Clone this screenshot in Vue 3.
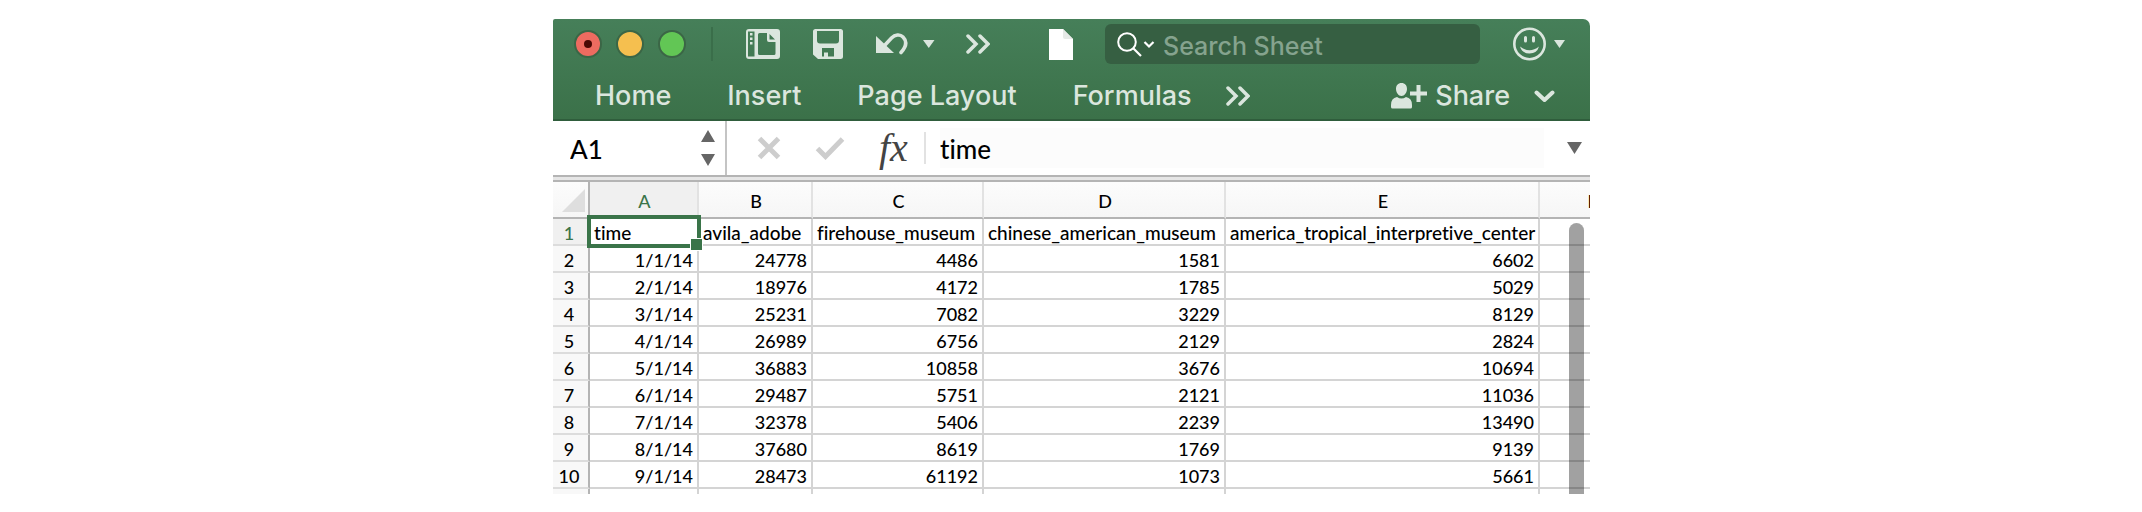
<script setup>
import { ref } from 'vue'

const tabs = ['Home', 'Insert', 'Page Layout', 'Formulas']
const columns = ['A', 'B', 'C', 'D', 'E', 'F']
const rows = [
  ['time', 'avila_adobe', 'firehouse_museum', 'chinese_american_museum', 'america_tropical_interpretive_center', ''],
  ['1/1/14', '24778', '4486', '1581', '6602', ''],
  ['2/1/14', '18976', '4172', '1785', '5029', ''],
  ['3/1/14', '25231', '7082', '3229', '8129', ''],
  ['4/1/14', '26989', '6756', '2129', '2824', ''],
  ['5/1/14', '36883', '10858', '3676', '10694', ''],
  ['6/1/14', '29487', '5751', '2121', '11036', ''],
  ['7/1/14', '32378', '5406', '2239', '13490', ''],
  ['8/1/14', '37680', '8619', '1769', '9139', ''],
  ['9/1/14', '28473', '61192', '1073', '5661', '']
]
const cellName = ref('A1')
const formula = ref('time')
const query = ref('')
</script>

<template>
  <main class="page">
    <div class="window">
      <header class="ribbon">
        <div class="titlebar">
          <div class="lights">
            <button class="light red" aria-label="Close"><span class="dot"></span></button>
            <button class="light amber" aria-label="Minimize"></button>
            <button class="light green" aria-label="Zoom"></button>
          </div>
          <span class="separator"></span>
          <button class="tool" aria-label="Templates">
            <svg width="34" height="30" viewBox="0 0 34 30">
              <path fill="#dbe6de" fill-rule="evenodd" d="M3 0H31Q34 0 34 3V27Q34 30 31 30H3Q0 30 0 27V3Q0 0 3 0ZM2 2.500V27.500H8.500V2.500ZM13.500 4Q12 4 12 5.500V24.500Q12 26 13.500 26H28Q29.500 26 29.500 24.500V13H23Q21 13 21 11V4Z" />
              <path fill="#417853" d="M23.500 5L29 10.500H23.500Z" />
              <path fill="#dbe6de" d="M4 4h2.500v2.500H4zM4 8.500h2.500V11H4zM4 13h2.500v2.500H4z" />
            </svg>
          </button>
          <button class="tool" aria-label="Save">
            <svg width="30" height="30" viewBox="0 0 30 30">
              <path fill="#dbe6de" fill-rule="evenodd" d="M2.500 0H27.500Q30 0 30 2.500V27.500Q30 30 27.500 30H5L0 25.500V2.500Q0 0 2.500 0ZM4 2V11.500Q4 14.500 7 14.500H23Q26 14.500 26 11.500V2ZM9 19V27.500H11V23.500H15V27.500H21V19Z" />
            </svg>
          </button>
          <button class="tool" aria-label="Undo">
            <svg width="32" height="22" viewBox="0 0 32 22">
              <path fill="#dbe6de" d="M0 3V20H18Z" />
              <path fill="none" stroke="#dbe6de" stroke-width="3.600" stroke-linecap="round" d="M9 12L15.500 5C19 1.500 24 1 27 4C31.500 8.500 30 14 25 19.500" />
            </svg>
          </button>
          <button class="tool undo-more" aria-label="Undo history">
            <svg width="12" height="8" viewBox="0 0 12 8"><path fill="#dbe6de" d="M0 0H11.500L5.750 8Z" /></svg>
          </button>
          <button class="tool commands" aria-label="More commands">
            <svg width="24" height="20" viewBox="0 0 24 20"><path class="line" d="M2 2L10 10L2 18M14 2L22 10L14 18" /></svg>
          </button>
          <svg class="file" width="24" height="31" viewBox="0 0 24 31">
            <path fill="#fff" d="M0 0H14L24 10V31H0Z" />
            <path fill="#e6eae7" d="M14 0L24 10H16Q14 10 14 8Z" />
          </svg>
          <label class="search">
            <svg width="38" height="26" viewBox="0 0 38 26">
              <circle cx="10" cy="10" r="8.800" fill="none" stroke="#fff" stroke-width="2" />
              <path fill="none" stroke="#fff" stroke-width="2.200" d="M16 16L24 24M27.500 10L32 14.500L36.500 10" />
            </svg>
            <input v-model="query" type="text" placeholder="Search Sheet" aria-label="Search Sheet">
          </label>
          <button class="tool smile" aria-label="Feedback">
            <svg width="33" height="34" viewBox="0 0 33 34">
              <circle cx="16.500" cy="17" r="15.200" fill="none" stroke="#dbe6de" stroke-width="2.600" />
              <path fill="none" stroke="#dbe6de" stroke-width="3" stroke-linecap="round" d="M12.500 10.500V14M20.500 10.500V14" />
              <path fill="#dbe6de" d="M7 19.500Q16.500 27 26 19.500Q24 26.500 16.500 26.500Q9 26.500 7 19.500Z" />
            </svg>
          </button>
          <button class="tool feedback-more" aria-label="Feedback options">
            <svg width="11" height="8" viewBox="0 0 11 8"><path fill="#dbe6de" d="M0 0H11L5.500 8Z" /></svg>
          </button>
        </div>
        <nav class="tabs">
          <button v-for="tab in tabs" :key="tab" class="tab">{{ tab }}</button>
          <button class="tool more-tabs" aria-label="More tabs">
            <svg width="24" height="20" viewBox="0 0 24 20"><path class="line" d="M2 2L10 10L2 18M14 2L22 10L14 18" /></svg>
          </button>
          <button class="tab share">
            <svg width="36" height="26" viewBox="0 0 36 26">
              <path fill="#dbe6de" d="M10.500 0C14 0 16 2.500 16 6C16 9.500 13.500 13 10.500 13C7.500 13 5 9.500 5 6C5 2.500 7 0 10.500 0ZM6 14Q10.500 17 15 14Q21 15 21 22V24Q21 25.500 19.500 25.500H1.500Q0 25.500 0 24V22Q0 15 6 14Z" />
              <path fill="none" stroke="#dbe6de" stroke-width="4" d="M27.500 2V19M19 10.500H36" />
            </svg>
            Share
          </button>
          <button class="tool collapse" aria-label="Collapse ribbon">
            <svg width="21" height="13" viewBox="0 0 21 13"><path fill="none" stroke="#dbe6de" stroke-width="4" stroke-linecap="round" stroke-linejoin="round" d="M2.500 2.500L10.500 10L18.500 2.500" /></svg>
          </button>
        </nav>
      </header>

      <section class="formula-bar">
        <div class="name-box">
          <input v-model="cellName" type="text" aria-label="Name box">
          <button class="stepper" aria-label="Choose name">
            <svg width="14" height="36" viewBox="0 0 14 36"><path fill="#666" d="M7 0L14 12H0ZM0 24H14L7 36Z" /></svg>
          </button>
        </div>
        <button class="tool cancel" aria-label="Cancel">
          <svg width="24" height="24" viewBox="0 0 24 24"><path class="pale" d="M2.500 2.500L21.500 21.500M21.500 2.500L2.500 21.500" /></svg>
        </button>
        <button class="tool enter" aria-label="Enter">
          <svg width="30" height="24" viewBox="0 0 30 24"><path class="pale" d="M2.500 12.500L10.500 20.500L27.500 3" /></svg>
        </button>
        <button class="fx" aria-label="Insert function">fx</button>
        <span class="divider"></span>
        <input v-model="formula" class="formula" type="text" aria-label="Formula">
        <button class="tool expand" aria-label="Expand formula bar">
          <svg width="15" height="12" viewBox="0 0 15 12"><path fill="#666" d="M0 0H15L7.500 12Z" /></svg>
        </button>
      </section>

      <section class="sheet">
        <table>
          <colgroup>
            <col class="w-index"><col class="w-a"><col class="w-b"><col class="w-c"><col class="w-d"><col class="w-e"><col>
          </colgroup>
          <thead>
            <tr>
              <th class="corner"><svg width="23" height="23" viewBox="0 0 23 23"><path fill="#dedede" d="M23 0V23H0Z" /></svg></th>
              <th v-for="(c, i) in columns" :key="c" scope="col" :class="{ active: i === 0 }">{{ c }}</th>
            </tr>
          </thead>
          <tbody>
            <tr v-for="(row, r) in rows" :key="r">
              <th scope="row" :class="{ active: r === 0 }">{{ r + 1 }}</th>
              <td v-for="(cell, c) in row" :key="c" :class="{ text: r === 0, selected: r === 0 && c === 0 }">{{ cell }}<span v-if="r === 0 && c === 0" class="handle"></span></td>
            </tr>
            <tr class="cut">
              <th></th>
              <td v-for="c in columns" :key="c"></td>
            </tr>
          </tbody>
        </table>
        <div class="scrollbar"></div>
      </section>
    </div>
  </main>
</template>

<style>
body {
  margin: 0;
  background: #fff;
}
</style>

<style scoped>
*,
*::before {
  box-sizing: border-box;
}
.page {
  padding: 19px 552px 18px 553px;
  font-family: Lato, "Liberation Sans", sans-serif;
  font-variant-ligatures: none;
}
.window {
  overflow: hidden;
  border-radius: 2px 7px 0 0;
}
button {
  border: 0;
  padding: 0;
  background: none;
  font: inherit;
  color: inherit;
  flex: none;
}
input {
  border: 0;
  padding: 0;
  background: none;
  font: inherit;
  font-variant-ligatures: none;
  color: inherit;
  outline: 0;
  min-width: 0;
}
svg {
  display: block;
  flex: none;
}
.ribbon {
  background: linear-gradient(#467f59, #3b7149);
  border-bottom: 2px solid #2f5d3c;
  color: #dbe6de;
  font-family: Inter, "Liberation Sans", sans-serif;
}
.line {
  fill: none;
  stroke: #dbe6de;
  stroke-width: 3.5;
  stroke-linecap: round;
}
.titlebar {
  display: flex;
  align-items: center;
  height: 50px;
  padding: 0 25px 0 21px;
}
.lights {
  display: flex;
  gap: 14px;
}
.light {
  display: grid;
  place-items: center;
  width: 28px;
  height: 28px;
  border: 2px solid #3b6646;
  border-radius: 50%;
}
.red {
  background: #ed6b60;
}
.amber {
  background: #f5bf4f;
}
.green {
  background: #62c655;
}
.dot {
  width: 8px;
  height: 8px;
  border-radius: 50%;
  background: #4a0804;
}
.separator {
  width: 2px;
  height: 34px;
  margin-left: 25px;
  background: #3a6e4a;
}
.titlebar .tool {
  margin-left: 33px;
}
.titlebar .undo-more {
  margin-left: 15px;
}
.titlebar .commands {
  margin-left: 31px;
}
.file {
  margin-left: 59px;
}
.search {
  display: flex;
  flex: 1;
  align-items: center;
  gap: 8px;
  min-width: 0;
  height: 40px;
  margin-left: 32px;
  padding: 2px 0 0 12px;
  border-radius: 6px;
  background: #365f42;
}
.search input {
  flex: 1;
  padding-top: 2px;
  font-size: 25px;
  font-weight: 500;
}
.search input::placeholder {
  color: #85a38e;
  opacity: 1;
}
.titlebar .feedback-more {
  margin-left: 8px;
}
.tabs {
  display: flex;
  align-items: center;
  height: 50px;
  padding: 4px 35px 0 42px;
  font-size: 27px;
  font-weight: 500;
  line-height: 32px;
}
.tab {
  margin-right: 56px;
  white-space: nowrap;
}
.more-tabs {
  margin-left: -22px;
}
.share {
  display: flex;
  align-items: center;
  gap: 8px;
  margin: 0 24px 0 auto;
}
.formula-bar {
  display: flex;
  align-items: center;
  height: 54px;
  background: #fff;
  color: #000;
  font-size: 26px;
  font-weight: 500;
}
.name-box {
  display: flex;
  align-items: center;
  align-self: stretch;
  width: 174px;
  padding: 0 10px 0 17px;
  border-right: 2px solid #c4c4c4;
}
.name-box input {
  flex: 1;
  height: 40px;
  padding-top: 2px;
}
.cancel {
  margin-left: 30px;
}
.enter {
  margin-left: 34px;
}
.pale {
  fill: none;
  stroke: #cdcdcd;
  stroke-width: 5;
}
.fx {
  width: 45px;
  margin-left: 34px;
  font-family: "Liberation Serif", serif;
  font-size: 40px;
  font-style: italic;
  font-weight: 400;
  line-height: 40px;
  text-align: left;
  color: #444;
}
.divider {
  width: 2px;
  height: 32px;
  background: #e2e2e2;
}
.formula {
  flex: 1;
  height: 40px;
  margin-left: 14px;
  padding-top: 2px;
  background: #fcfcfc;
}
.expand {
  margin: 0 8px 0 23px;
}
.sheet {
  position: relative;
  overflow: hidden;
  border-top: 2px solid #b4b4b4;
  background: #fff;
}
.sheet::before {
  content: "";
  display: block;
  height: 5px;
  border-bottom: 2px solid #b4b4b4;
  background: #e6e6e6;
}
table {
  width: calc(100% + 55px);
  table-layout: fixed;
  border-collapse: separate;
  border-spacing: 0;
  font-size: 18px;
  font-weight: 500;
  line-height: 22px;
  color: #000;
}
.w-index {
  width: 37px;
}
.w-a {
  width: 109px;
}
.w-b {
  width: 114px;
}
.w-c {
  width: 171px;
}
.w-d {
  width: 242px;
}
.w-e {
  width: 314px;
}
th {
  padding: 0;
  font-weight: 500;
}
thead th {
  height: 37px;
  padding: 2px 0 0 2px;
  border-right: 2px solid #e2e2e2;
  border-bottom: 2px solid #b4b4b4;
  background: linear-gradient(#fcfcfc, #f6f6f6);
}
thead .active {
  background: #f0f0f0;
}
thead .corner {
  border-right-color: #b4b4b4;
}
.corner svg {
  margin-left: 7px;
}
.active {
  color: #3a7449;
}
tbody th {
  height: 27px;
  padding: 3px 3px 0 0;
  border-right: 2px solid #b4b4b4;
  border-bottom: 2px solid #dcdcdc;
  background: #f8f8f8;
}
tbody .active {
  background: #f0f0f0;
}
td {
  height: 27px;
  padding: 3px 4px 0;
  border-right: 2px solid #d4d4d4;
  border-bottom: 2px solid #d4d4d4;
  text-align: right;
  white-space: nowrap;
}
.text {
  font-size: 19px;
  text-align: left;
}
.selected {
  position: relative;
}
.selected::before {
  content: "";
  position: absolute;
  inset: -4px -4px -4px -3px;
  border: 4px solid #3a7449;
}
.handle {
  position: absolute;
  right: -6px;
  bottom: -7px;
  width: 13px;
  height: 13px;
  border: 1px solid #fff;
  background: #3a7449;
}
.cut th,
.cut td {
  height: 5px;
  padding: 0;
  border-bottom: 0;
}
.scrollbar {
  position: absolute;
  top: 46px;
  right: 6px;
  bottom: 0;
  width: 15px;
  border-radius: 8px 8px 0 0;
  background: rgba(0, 0, 0, 0.37);
}
</style>
